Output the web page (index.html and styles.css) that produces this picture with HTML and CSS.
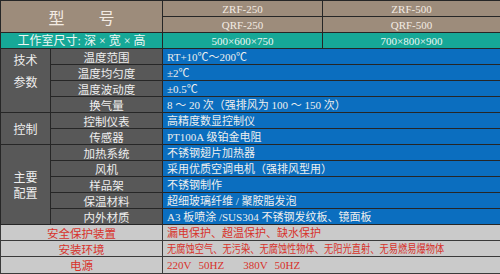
FILE: index.html
```html
<!DOCTYPE html>
<html lang="zh">
<head>
<meta charset="utf-8">
<link rel="stylesheet" href="styles.css">
</head>
<body>
<table class="spec">
  <colgroup>
    <col class="c1"><col class="c2"><col class="c3"><col class="c4">
  </colgroup>
  <tr class="head">
    <td colspan="2" rowspan="2" class="title">型<span class="gap"></span>号</td>
    <td class="num">ZRF-250</td>
    <td class="num">ZRF-500</td>
  </tr>
  <tr class="head">
    <td class="num">QRF-250</td>
    <td class="num">QRF-500</td>
  </tr>
  <tr class="size">
    <td colspan="2" class="sizelbl">工作室尺寸: 深 × 宽 × 高</td>
    <td class="num">500×600×750</td>
    <td class="num">700×800×900</td>
  </tr>
  <tr>
    <td rowspan="4" class="cat cat-a">技术<br>参数</td>
    <td class="lbl">温度范围</td>
    <td colspan="2" class="val">RT+10℃～200℃</td>
  </tr>
  <tr><td class="lbl">温度均匀度</td><td colspan="2" class="val">±2℃</td></tr>
  <tr><td class="lbl">温度波动度</td><td colspan="2" class="val">±0.5℃</td></tr>
  <tr><td class="lbl">换气量</td><td colspan="2" class="val">8 ～ 20 次（强排风为 100 ～ 150 次）</td></tr>
  <tr>
    <td rowspan="2" class="cat">控制</td>
    <td class="lbl">控制仪表</td>
    <td colspan="2" class="val">高精度数显控制仪</td>
  </tr>
  <tr><td class="lbl">传感器</td><td colspan="2" class="val">PT100A 级铂金电阻</td></tr>
  <tr>
    <td rowspan="5" class="cat cat-b">主要<br>配置</td>
    <td class="lbl">加热系统</td>
    <td colspan="2" class="val">不锈钢翅片加热器</td>
  </tr>
  <tr><td class="lbl">风机</td><td colspan="2" class="val">采用优质空调电机（强排风型用）</td></tr>
  <tr><td class="lbl">样品架</td><td colspan="2" class="val">不锈钢制作</td></tr>
  <tr><td class="lbl">保温材料</td><td colspan="2" class="val">超细玻璃纤维 / 聚胺脂发泡</td></tr>
  <tr><td class="lbl">内外材质</td><td colspan="2" class="val">A3 板喷涂 /SUS304 不锈钢发纹板、镜面板</td></tr>
  <tr class="foot">
    <td colspan="2" class="flbl">安全保护装置</td>
    <td colspan="2" class="fval">漏电保护、超温保护、缺水保护</td>
  </tr>
  <tr class="foot">
    <td colspan="2" class="flbl">安装环境</td>
    <td colspan="2" class="fval"><span class="narrow">无腐蚀空气、无污染、无腐蚀性物体、无阳光直射、无易燃易爆物体</span></td>
  </tr>
  <tr class="foot last">
    <td colspan="2" class="flbl">电源</td>
    <td colspan="2" class="fval">220V<span class="sp"></span>50HZ<span class="sp2"></span>380V<span class="sp"></span>50HZ</td>
  </tr>
</table>
</body>
</html>
```

FILE: styles.css
```css
html, body {
  margin: 0;
  padding: 0;
  background: #c9c9c9;
}

.spec {
  border-collapse: collapse;
  table-layout: fixed;
  width: 500px;
  font-family: "Liberation Serif", "Noto Sans CJK SC", serif;
  font-size: 11px;
  line-height: 14px;
}

.c1 { width: 50px; }
.c2 { width: 112px; }
.c3 { width: 160px; }
.c4 { width: 178px; }

.spec td {
  border: 1px solid #262626;
  padding: 0 4px;
  height: 15px;
  white-space: nowrap;
  overflow: hidden;
  color: #eeeeee;
}

.head td {
  background: #9d8c7b;
  color: #f3ebe3;
  text-align: center;
}

.title {
  font-family: "Noto Sans CJK SC", sans-serif;
  font-size: 16px;
}

.gap {
  display: inline-block;
  width: 34px;
}

.num {
  font-size: 11px;
}

.size td {
  background: #16a897;
  color: #eef7f4;
  text-align: center;
}

.sizelbl {
  font-family: "Liberation Serif", "Noto Sans CJK SC", serif;
  font-size: 12px;
}

.cat, .lbl {
  background: #585858;
  font-family: "Noto Sans CJK SC", sans-serif;
  color: #e6e6e6;
  text-align: center;
}

.lbl {
  font-size: 11.5px;
}

.cat {
  font-size: 12px;
  line-height: 16px;
}

.cat-a {
  line-height: 22px;
  vertical-align: top;
  padding-top: 5px;
}

.cat-b {
  line-height: 16px;
}

.val {
  background: #0b6ebf;
  color: #f2f6fb;
  font-family: "Liberation Serif", "Noto Sans CJK SC", serif;
  text-align: left;
}

.foot td {
  background: #cacaca;
  color: #d8322b;
  border-color: #3a3a3a;
}

.flbl {
  text-align: center;
  font-family: "Noto Sans CJK SC", sans-serif;
  font-size: 11.5px;
}

.fval {
  text-align: left;
  font-family: "Liberation Serif", "Noto Sans CJK SC", serif;
}

.narrow {
  display: inline-block;
  transform: scaleX(0.84);
  transform-origin: left center;
}

.last td {
  height: 16px;
}

.sp {
  display: inline-block;
  width: 7px;
}

.sp2 {
  display: inline-block;
  width: 19px;
}
```
